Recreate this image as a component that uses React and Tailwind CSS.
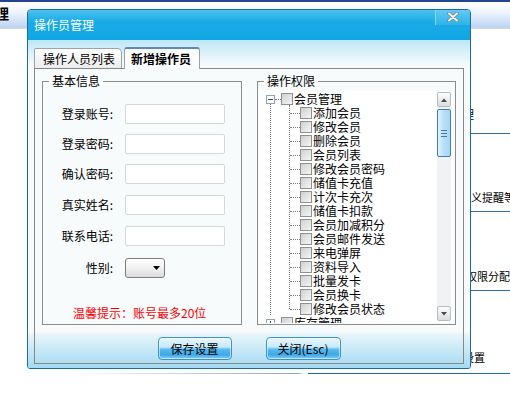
import React from "react";

const perms = [
  "添加会员",
  "修改会员",
  "删除会员",
  "会员列表",
  "修改会员密码",
  "储值卡充值",
  "计次卡充次",
  "储值卡扣款",
  "会员加减积分",
  "会员邮件发送",
  "来电弹屏",
  "资料导入",
  "批量发卡",
  "会员换卡",
  "修改会员状态",
];

const fields = [
  { label: "登录账号:", gap: "mt-[16px]" },
  { label: "登录密码:", gap: "mt-[10px]" },
  { label: "确认密码:", gap: "mt-[10px]" },
  { label: "真实姓名:", gap: "mt-[11px]" },
  { label: "联系电话:", gap: "mt-[11px]" },
];

// rows of the page behind the dialog, only their right ends show
const pageRows = [
  { text: "会员管理", cls: "h-[105px] pb-[12px] pl-[10px] border-b" },
  { text: "会员自定义提醒等功能", cls: "h-[78px] pb-[7px] pl-[7px] border-b" },
  { text: "操作员权限分配", cls: "h-[79px] pb-[7px] pl-[13px] border-b" },
  { text: "系统设置", cls: "h-[82px] pb-[9px] pl-[21px]" },
];

const CheckBox = () => (
  <span className="w-[12px] h-[12px] shrink-0 border border-[#8f9090] bg-[linear-gradient(135deg,#cfd0d0,#f6f6f6)]" />
);

const ToggleBox = ({ open }) => (
  <span className="relative w-[9px] h-[9px] shrink-0 border border-[#93a2b8] bg-white flex items-center justify-center">
    <span className="w-[5px] h-px bg-[#24499a]" />
    {!open && <span className="absolute w-px h-[5px] bg-[#24499a]" />}
  </span>
);

const Dotted = ({ w }) => <span className={`${w} shrink-0 border-t border-dotted border-[#7a7a7a]`} />;

const ScrollArrow = ({ up }) => (
  <div className="h-[15px] shrink-0 rounded-[2px] border border-[#b9bcbf] bg-[linear-gradient(to_bottom,#fdfdfd,#dcdddf)] flex items-center justify-center">
    <svg width="6" height="4" viewBox="0 0 6 4">
      <path d={up ? "M0 4 L3 0.5 L6 4 Z" : "M0 0 L3 3.5 L6 0 Z"} fill="#4a4a4a" />
    </svg>
  </div>
);

function PermissionTree() {
  return (
    <div className="ml-[1px] mt-[3px] mb-[1px] w-[194px] h-[232px] bg-white flex overflow-hidden">
      <div className="relative flex-1 pt-[1px] pl-[7px] text-[12px] leading-[14px] overflow-hidden">
        <span className="absolute left-[11px] top-[13px] bottom-0 border-l border-dotted border-[#7a7a7a]" />
        <div className="flex items-center h-[14px]">
          <ToggleBox open />
          <Dotted w="w-[6px]" />
          <CheckBox />
          <span className="ml-[1px] whitespace-nowrap">会员管理</span>
        </div>
        <div className="relative ml-[23px]">
          <span className="absolute left-0 top-[-1px] bottom-[7px] border-l border-dotted border-[#7a7a7a]" />
          {perms.map((p) => (
            <div key={p} className="flex items-center h-[14px] pl-[1px]">
              <Dotted w="w-[10px]" />
              <CheckBox />
              <span className="ml-[1px] whitespace-nowrap">{p}</span>
            </div>
          ))}
        </div>
        <div className="relative flex items-center h-[14px] bg-white">
          <ToggleBox />
          <Dotted w="w-[6px]" />
          <CheckBox />
          <span className="ml-[1px] whitespace-nowrap">库存管理</span>
        </div>
      </div>

      {/* scrollbar */}
      <div className="w-[14px] mr-[2px] mt-[1px] mb-[2px] flex flex-col bg-[#f1f2f3]">
        <ScrollArrow up />
        <div className="mt-[2px] h-[48px] rounded-[2px] border border-[#3d80b3] bg-[linear-gradient(to_right,#e2f3fc,#b9e1f8_45%,#a5d5f3)] flex flex-col items-center justify-center gap-[2px]">
          <span className="w-[6px] h-px bg-[#4a7896]" />
          <span className="w-[6px] h-px bg-[#4a7896]" />
          <span className="w-[6px] h-px bg-[#4a7896]" />
        </div>
        <div className="flex-1" />
        <ScrollArrow />
      </div>
    </div>
  );
}

function BasicInfo() {
  return (
    <fieldset className="w-[200px] shrink-0 border border-[#8c8c8c]">
      <legend className="ml-[6px] px-[3px] text-[12px] leading-[14px]">基本信息</legend>
      <div className="h-[236px] flex flex-col text-[12px]">
        {fields.map((f) => (
          <div key={f.label} className={`${f.gap} flex items-center h-[20px]`}>
            <span className="w-[70px] text-right leading-[14px]">{f.label}</span>
            <span className="ml-[12px] w-[100px] h-[20px] rounded-[2px] border border-[#d3d8db] bg-white" />
          </div>
        ))}
        <div className="mt-[12px] flex items-center h-[20px]">
          <span className="w-[70px] text-right leading-[14px]">性别:</span>
          <span className="ml-[12px] w-[40px] h-[20px] rounded-[3px] border border-[#7d7d7d] bg-[linear-gradient(to_bottom,#ffffff,#f1f1f1_50%,#dcdcdc)] flex items-center justify-end pr-[4px]">
            <svg width="7" height="4" viewBox="0 0 7 4">
              <path d="M0 0 H7 L3.5 4 Z" fill="#000" />
            </svg>
          </span>
        </div>
        <p className="mt-[28px] pl-[30px] text-[12px] leading-[14px] text-[#ff0000] whitespace-nowrap">
          温馨提示：账号最多20位
        </p>
      </div>
    </fieldset>
  );
}

function DialogButton({ children, w }) {
  return (
    <button
      className={`${w} h-[23px] rounded-[4px] border border-[#3a92d4] bg-[linear-gradient(to_bottom,#e6f6fd_0%,#c9eafb_42%,#58b8ed_55%,#3ea8e7_80%,#86cff4_100%)] shadow-[inset_0_0_0_1px_rgba(255,255,255,0.55)] text-[12px] leading-[14px] text-black`}
    >
      {children}
    </button>
  );
}

function OperatorDialog() {
  return (
    <div className="absolute left-[27px] top-[9px] w-[444px] h-[360px] flex flex-col border border-[#1d6a9b] rounded-t-[4px] rounded-b-[3px] overflow-hidden">
      {/* title bar */}
      <div className="h-[30px] shrink-0 flex bg-[linear-gradient(to_bottom,#4cc1ef,#1aabe6_40%,#10a6e3)]">
        <span className="flex-1 pl-[6px] flex items-center text-[12px] text-white">操作员管理</span>
        <div className="w-[35px] h-[15px] border-l border-[#8fd6f3] bg-[linear-gradient(to_bottom,#63c9f1,#2db3e8)] flex items-start justify-center pt-[2px]">
          <svg width="12" height="10" viewBox="0 0 12 10">
            <path d="M2 1.5 L10 8.5 M10 1.5 L2 8.5" stroke="#6f8592" strokeWidth="3.6" strokeLinecap="round" />
            <path d="M2 1.5 L10 8.5 M10 1.5 L2 8.5" stroke="#f4f7f8" strokeWidth="2" strokeLinecap="round" />
          </svg>
        </div>
      </div>

      {/* body */}
      <div className="flex-1 flex flex-col px-[6px] pt-[7px] pb-[4px] bg-[linear-gradient(to_bottom,#bfe7f6_0px,#f7fbfc_26px,#f7fbfc_292px,#e8f5fa_294px,#a3daf3_100%)]">
        <div className="flex items-end h-[21px] text-[12px] leading-[14px]">
          <span className="w-[88px] h-[20px] pl-[8px] flex items-center border border-b-0 border-[#9aa3a6] rounded-tl-[2px] rounded-tr-[5px] bg-[linear-gradient(to_bottom,#ffffff,#ececec)]">
            操作人员列表
          </span>
          <span className="relative z-10 ml-[2px] -mb-px w-[76px] h-[22px] pl-[6px] flex items-center font-bold border border-b-0 border-t-2 border-[#9aa3a6] border-t-[#5d89bd] rounded-t-[3px] bg-[#fbfcfc]">
            新增操作员
          </span>
        </div>

        <div className="h-[296px] flex flex-col border border-[#878787]">
          <div className="pt-[5px] ml-[7px] flex gap-[15px]">
            <BasicInfo />
            <fieldset className="w-[199px] shrink-0 border border-[#8c8c8c]">
              <legend className="ml-[6px] px-[3px] text-[12px] leading-[14px]">操作权限</legend>
              <PermissionTree />
            </fieldset>
          </div>
          <div className="mt-[12px] flex justify-center gap-[34px]">
            <DialogButton w="w-[74px]">保存设置</DialogButton>
            <DialogButton w="w-[75px]">关闭(Esc)</DialogButton>
          </div>
        </div>
      </div>
    </div>
  );
}

function BackgroundPage() {
  return (
    <div className="flex flex-col">
      <div className="h-[29px] overflow-hidden border-t-2 border-b border-t-[#22458d] border-b-[#d5d7da] bg-[linear-gradient(to_bottom,#ffffff,#eef4fd_40%,#bcd3f3)]">
        <span className="block mt-[2px] ml-[-33px] text-[14px] leading-[19px] font-bold whitespace-nowrap">员管理</span>
      </div>
      <div className="flex h-[344px]">
        <div className="w-[420px] shrink-0" />
        <div className="flex-1 flex flex-col text-[11px] leading-[14px]">
          {pageRows.map((r) => (
            <div key={r.text} className={`${r.cls} shrink-0 flex items-end whitespace-nowrap overflow-hidden border-[#2b6fa3]`}>
              {r.text}
            </div>
          ))}
        </div>
      </div>
      <div className="h-px bg-[linear-gradient(to_right,transparent_68px,#8aa4bf_298px,transparent_304px,transparent_308px,#1f6a9e_308px)]" />
    </div>
  );
}

export default function App() {
  return (
    <div className="relative w-[510px] h-[397px] overflow-hidden bg-white text-black font-['Noto_Sans_CJK_SC','Noto_Sans',sans-serif]">
      <BackgroundPage />
      <OperatorDialog />
    </div>
  );
}
